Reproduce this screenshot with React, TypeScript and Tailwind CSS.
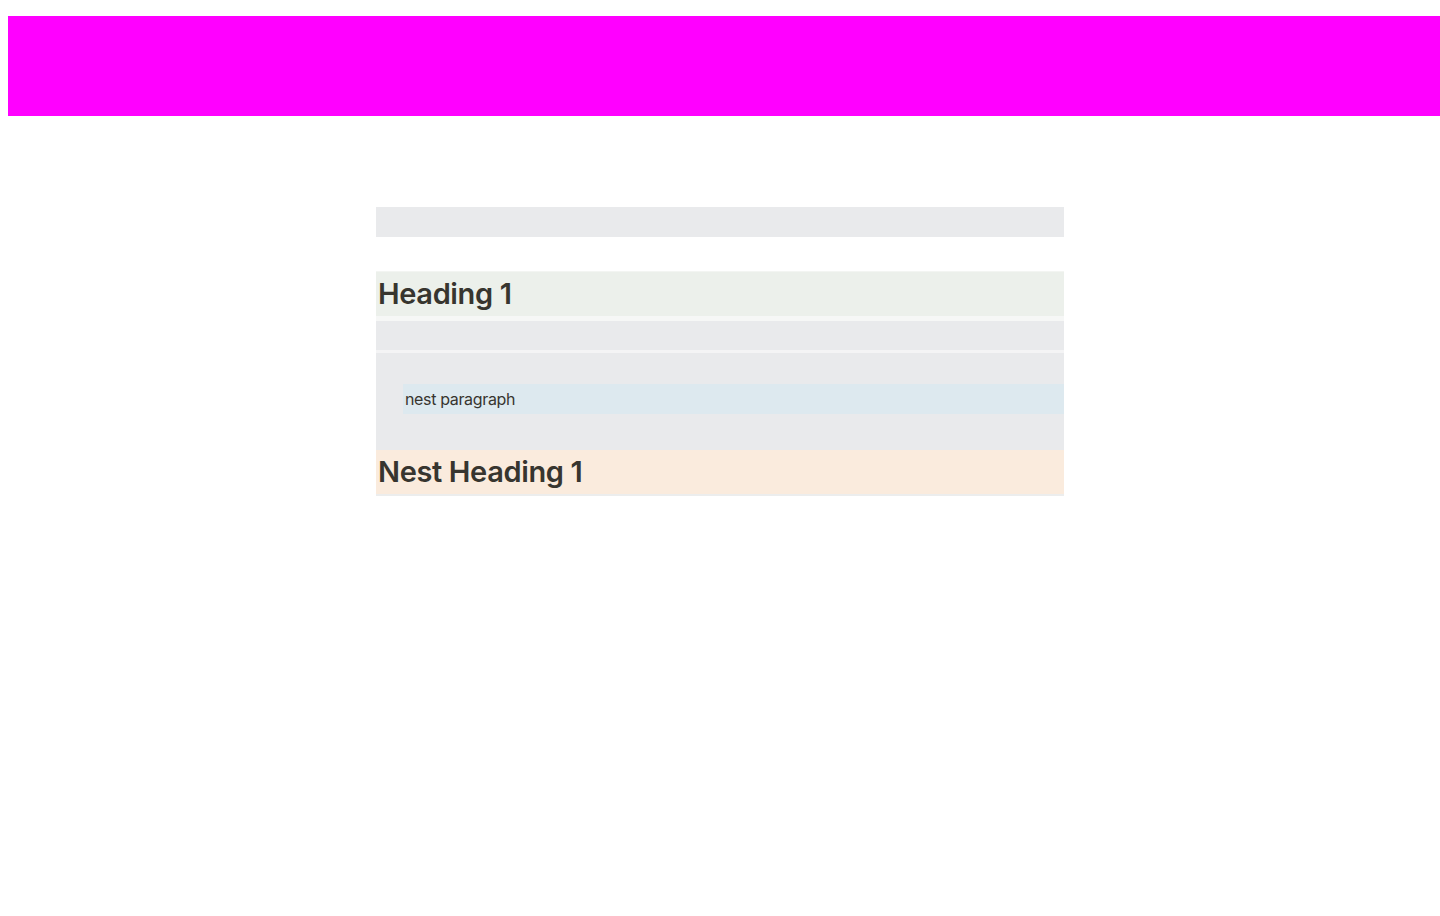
import React from "react";

export default function App() {
  return (
    <div className="min-h-[916px] bg-white" style={{ fontFamily: "Inter, 'Noto Sans', sans-serif" }}>
      <div className="pt-4">
        <div className="ml-2 h-[100px] bg-[#ff00ff]" />
      </div>
      <div className="mx-auto mt-[91px] w-[688px] text-[#37352f]">
        <div className="h-[30px] bg-[#e9eaec]" />
        <div className="mt-[34px] border-t border-[#f3f5f2] bg-[#ecf0eb] px-[2px] h-[45px] flex items-center">
          <h1 className="text-[29px] font-semibold leading-[1.3] tracking-[-0.36px]">Heading 1</h1>
        </div>
        <div className="h-[5px] bg-[#f6f7f6]" />
        <div className="h-[29px] bg-[#e9eaec]" />
        <div className="h-[3px] bg-[#f4f4f5]" />
        <div className="bg-[#e9eaec] pt-[31px] pb-[36px]">
          <div className="ml-[27px] h-[30px] bg-[#dde9ef] px-[2px] flex items-center">
            <p className="text-[16px] leading-[1.5] tracking-[-0.35px]">nest paragraph</p>
          </div>
        </div>
        <div className="h-[44px] bg-[#faebdd] px-[2px] flex items-center">
          <h1 className="text-[29px] font-semibold leading-[1.3] tracking-[-0.36px]">Nest Heading 1</h1>
        </div>
        <div className="h-[2px] bg-[#eceded]" />
      </div>
    </div>
  );
}
